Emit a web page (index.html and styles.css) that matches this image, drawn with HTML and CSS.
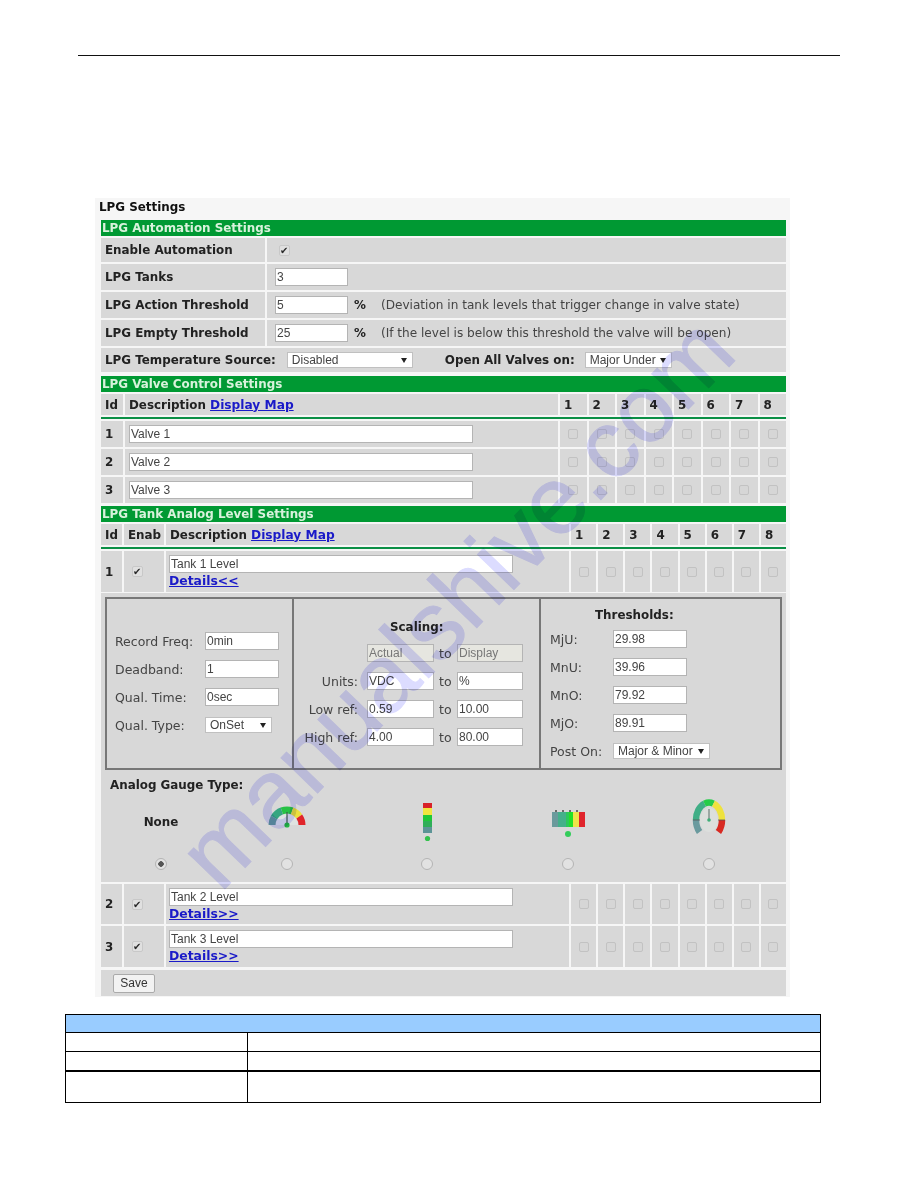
FILE: index.html
```html
<!DOCTYPE html>
<html lang="en">
<head>
  <meta charset="UTF-8" />
  <title>LPG Settings</title>
  <link rel="stylesheet" href="styles.css">
</head>
<body>
  <div class="page-rule"></div>

  <div class="shot">
    <div class="shot-title">LPG Settings</div>
    <form class="form">
      <div class="bar">LPG Automation Settings</div>
      <div class="row row-set h24">
        <div class="cell strong">Enable Automation</div>
        <div class="cell val"><input class="chk chk-main" type="checkbox" checked></div>
      </div>
      <div class="row row-set h26">
        <div class="cell strong">LPG Tanks</div>
        <div class="cell val"><input class="txt w73" type="text" value="3"></div>
      </div>
      <div class="row row-set h26">
        <div class="cell strong">LPG Action Threshold</div>
        <div class="cell val"><input class="txt w73" type="text" value="5"><b class="pct">%</b><span class="note">(Deviation in tank levels that trigger change in valve state)</span></div>
      </div>
      <div class="row row-set h26">
        <div class="cell strong">LPG Empty Threshold</div>
        <div class="cell val"><input class="txt w73" type="text" value="25"><b class="pct">%</b><span class="note">(If the level is below this threshold the valve will be open)</span></div>
      </div>
      <div class="row h24">
        <div class="cell strong temp">
          <span>LPG Temperature Source:</span>
          <select class="sel sel-temp"><option>Disabled</option></select>
          <span class="open-label">Open All Valves on:</span>
          <select class="sel sel-open"><option>Major Under</option></select>
        </div>
      </div>

      <div class="bar bar-next">LPG Valve Control Settings</div>
      <div class="row row-valve h21">
        <div class="cell strong">Id</div>
        <div class="cell strong">Description <a href="#">Display Map</a></div>
        <div class="cell strong num">1</div><div class="cell strong num">2</div><div class="cell strong num">3</div><div class="cell strong num">4</div>
        <div class="cell strong num">5</div><div class="cell strong num">6</div><div class="cell strong num">7</div><div class="cell strong num">8</div>
      </div>
      <div class="green-line"></div>
      <div class="row row-valve h26">
        <div class="cell strong">1</div>
        <div class="cell"><input class="txt w344" type="text" value="Valve 1"></div>
        <div class="cell box"><input class="chk" type="checkbox"></div><div class="cell box"><input class="chk" type="checkbox"></div><div class="cell box"><input class="chk" type="checkbox"></div><div class="cell box"><input class="chk" type="checkbox"></div>
        <div class="cell box"><input class="chk" type="checkbox"></div><div class="cell box"><input class="chk" type="checkbox"></div><div class="cell box"><input class="chk" type="checkbox"></div><div class="cell box"><input class="chk" type="checkbox"></div>
      </div>
      <div class="row row-valve h26">
        <div class="cell strong">2</div>
        <div class="cell"><input class="txt w344" type="text" value="Valve 2"></div>
        <div class="cell box"><input class="chk" type="checkbox"></div><div class="cell box"><input class="chk" type="checkbox"></div><div class="cell box"><input class="chk" type="checkbox"></div><div class="cell box"><input class="chk" type="checkbox"></div>
        <div class="cell box"><input class="chk" type="checkbox"></div><div class="cell box"><input class="chk" type="checkbox"></div><div class="cell box"><input class="chk" type="checkbox"></div><div class="cell box"><input class="chk" type="checkbox"></div>
      </div>
      <div class="row row-valve h26">
        <div class="cell strong">3</div>
        <div class="cell"><input class="txt w344" type="text" value="Valve 3"></div>
        <div class="cell box"><input class="chk" type="checkbox"></div><div class="cell box"><input class="chk" type="checkbox"></div><div class="cell box"><input class="chk" type="checkbox"></div><div class="cell box"><input class="chk" type="checkbox"></div>
        <div class="cell box"><input class="chk" type="checkbox"></div><div class="cell box"><input class="chk" type="checkbox"></div><div class="cell box"><input class="chk" type="checkbox"></div><div class="cell box"><input class="chk" type="checkbox"></div>
      </div>

      <div class="bar bar-tank">LPG Tank Analog Level Settings</div>
      <div class="row row-tank h21">
        <div class="cell strong">Id</div>
        <div class="cell strong">Enab</div>
        <div class="cell strong">Description <a href="#">Display Map</a></div>
        <div class="cell strong num">1</div><div class="cell strong num">2</div><div class="cell strong num">3</div><div class="cell strong num">4</div>
        <div class="cell strong num">5</div><div class="cell strong num">6</div><div class="cell strong num">7</div><div class="cell strong num">8</div>
      </div>
      <div class="green-line"></div>
      <div class="row row-tank h41">
        <div class="cell strong">1</div>
        <div class="cell enab"><input class="chk chk-main" type="checkbox" checked></div>
        <div class="cell desc"><input class="txt w344" type="text" value="Tank 1 Level"><a href="#">Details&lt;&lt;</a></div>
        <div class="cell box"><input class="chk" type="checkbox"></div><div class="cell box"><input class="chk" type="checkbox"></div><div class="cell box"><input class="chk" type="checkbox"></div><div class="cell box"><input class="chk" type="checkbox"></div>
        <div class="cell box"><input class="chk" type="checkbox"></div><div class="cell box"><input class="chk" type="checkbox"></div><div class="cell box"><input class="chk" type="checkbox"></div><div class="cell box"><input class="chk" type="checkbox"></div>
      </div>

      <div class="detail">
        <div class="detail-box">
          <div class="col col-left">
            <label>Record Freq:</label><input class="txt w74" type="text" value="0min">
            <label>Deadband:</label><input class="txt w74" type="text" value="1">
            <label>Qual. Time:</label><input class="txt w74" type="text" value="0sec">
            <label>Qual. Type:</label><select class="sel sel-type"><option>OnSet</option></select>
          </div>
          <div class="col col-mid">
            <div class="col-title scaling">Scaling:</div>
            <div class="scale-grid">
              <span></span><input class="txt off" type="text" value="Actual" disabled><span class="to">to</span><input class="txt off" type="text" value="Display" disabled>
              <label>Units:</label><input class="txt" type="text" value="VDC"><span class="to">to</span><input class="txt" type="text" value="%">
              <label>Low ref:</label><input class="txt" type="text" value="0.59"><span class="to">to</span><input class="txt" type="text" value="10.00">
              <label>High ref:</label><input class="txt" type="text" value="4.00"><span class="to">to</span><input class="txt" type="text" value="80.00">
            </div>
          </div>
          <div class="col col-right">
            <div class="col-title thresholds">Thresholds:</div>
            <div class="thresh-grid">
              <label>MjU:</label><input class="txt w74" type="text" value="29.98">
              <label>MnU:</label><input class="txt w74" type="text" value="39.96">
              <label>MnO:</label><input class="txt w74" type="text" value="79.92">
              <label>MjO:</label><input class="txt w74" type="text" value="89.91">
              <label>Post On:</label><select class="sel sel-post"><option>Major &amp; Minor</option></select>
            </div>
          </div>
        </div>

        <div class="gauge-title">Analog Gauge Type:</div>
        <div class="gauges">
          <div class="gauge">
            <div class="gauge-pic strong">None</div>
            <input class="radio" type="radio" name="gauge" checked>
          </div>
          <div class="gauge">
            <div class="gauge-pic">
              <svg width="60" height="45" viewBox="0 0 60 45" fill="none">
                <path d="M19 26A11 11 0 0 1 41 26Z" fill="#dfe3e1"/>
                <g stroke-width="7">
                  <path d="M15 26A15 15 0 0 1 17 18.5" stroke="#62989a"/>
                  <path d="M17 18.5A15 15 0 0 1 24.87 11.9" stroke="#35a680"/>
                  <path d="M24.87 11.9A15 15 0 0 1 35.13 11.9" stroke="#27c244"/>
                  <path d="M35.13 11.9A15 15 0 0 1 42.29 17.4" stroke="#ece03e"/>
                  <path d="M42.29 17.4A15 15 0 0 1 45 26" stroke="#e0242a"/>
                </g>
                <path d="M30 26V13" stroke="#3f5a50" stroke-width="1.2"/>
                <circle cx="30" cy="26" r="2.6" fill="#22b844"/>
              </svg>
            </div>
            <input class="radio" type="radio" name="gauge">
          </div>
          <div class="gauge">
            <div class="gauge-pic">
              <svg width="60" height="45" viewBox="0 0 60 45">
                <rect x="26" y="4" width="9" height="5" fill="#d82228"/>
                <rect x="26" y="9" width="9" height="7" fill="#f0e640"/>
                <rect x="26" y="16" width="9" height="6" fill="#1fc838"/>
                <rect x="26" y="22" width="9" height="6" fill="#2fae58"/>
                <rect x="26" y="28" width="9" height="6" fill="#5c9496"/>
                <circle cx="30.5" cy="39.5" r="2.6" fill="#33c24c"/>
              </svg>
            </div>
            <input class="radio" type="radio" name="gauge">
          </div>
          <div class="gauge">
            <div class="gauge-pic">
              <svg width="60" height="45" viewBox="0 0 60 45">
                <rect x="14" y="13" width="6" height="15" fill="#6a9a9c"/>
                <rect x="20" y="13" width="8" height="15" fill="#44b08a"/>
                <rect x="28" y="13" width="3" height="15" fill="#2cc85a"/>
                <rect x="31" y="13" width="4" height="15" fill="#22e028"/>
                <rect x="35" y="13" width="6" height="15" fill="#eee44a"/>
                <rect x="41" y="13" width="6" height="15" fill="#e0242c"/>
                <path d="M18 11v2M25 11v2M32 11v2M39 11v2" stroke="#444" stroke-width="1.5"/>
                <circle cx="30" cy="35" r="3" fill="#33cc5a"/>
              </svg>
            </div>
            <input class="radio" type="radio" name="gauge">
          </div>
          <div class="gauge">
            <div class="gauge-pic">
              <svg width="60" height="45" viewBox="0 0 60 45" fill="none">
                <ellipse cx="30" cy="21" rx="9" ry="12" fill="#dcdfdd"/>
                <g stroke-width="6.5">
                  <path d="M20.6 33A13 17.5 0 0 1 17 21" stroke="#6a9a9e"/>
                  <path d="M17 21A13 17.5 0 0 1 25.55 4.56" stroke="#40ae86"/>
                  <path d="M25.55 4.56A13 17.5 0 0 1 34.45 4.56" stroke="#25cc48"/>
                  <path d="M34.45 4.56A13 17.5 0 0 1 43 21" stroke="#eee23e"/>
                  <path d="M43 21A13 17.5 0 0 1 39.4 33" stroke="#d82a22"/>
                </g>
                <path d="M14 21h7M39 21h7" stroke="#555" stroke-width=".8"/>
                <path d="M30 21V10" stroke="#5a6f68" stroke-width="1"/>
                <circle cx="30" cy="21" r="1.8" fill="#3fae78"/>
              </svg>
            </div>
            <input class="radio" type="radio" name="gauge">
          </div>
        </div>
      </div>

      <div class="row row-tank h40">
        <div class="cell strong">2</div>
        <div class="cell enab"><input class="chk chk-main" type="checkbox" checked></div>
        <div class="cell desc"><input class="txt w344" type="text" value="Tank 2 Level"><a href="#">Details&gt;&gt;</a></div>
        <div class="cell box"><input class="chk" type="checkbox"></div><div class="cell box"><input class="chk" type="checkbox"></div><div class="cell box"><input class="chk" type="checkbox"></div><div class="cell box"><input class="chk" type="checkbox"></div>
        <div class="cell box"><input class="chk" type="checkbox"></div><div class="cell box"><input class="chk" type="checkbox"></div><div class="cell box"><input class="chk" type="checkbox"></div><div class="cell box"><input class="chk" type="checkbox"></div>
      </div>
      <div class="row row-tank h41">
        <div class="cell strong">3</div>
        <div class="cell enab"><input class="chk chk-main" type="checkbox" checked></div>
        <div class="cell desc"><input class="txt w344" type="text" value="Tank 3 Level"><a href="#">Details&gt;&gt;</a></div>
        <div class="cell box"><input class="chk" type="checkbox"></div><div class="cell box"><input class="chk" type="checkbox"></div><div class="cell box"><input class="chk" type="checkbox"></div><div class="cell box"><input class="chk" type="checkbox"></div>
        <div class="cell box"><input class="chk" type="checkbox"></div><div class="cell box"><input class="chk" type="checkbox"></div><div class="cell box"><input class="chk" type="checkbox"></div><div class="cell box"><input class="chk" type="checkbox"></div>
      </div>
      <div class="save-row"><button class="save-btn" type="button">Save</button></div>
    </form>
  </div>

  <table class="spec">
    <colgroup><col class="spec-first"><col></colgroup>
    <tr class="spec-head"><td colspan="2"></td></tr>
    <tr class="spec-row"><td></td><td></td></tr>
    <tr class="spec-row"><td></td><td></td></tr>
    <tr class="spec-last"><td></td><td></td></tr>
  </table>

  <div class="watermark">manualshive.com</div>
</body>
</html>
```

FILE: styles.css
```css
html, body {
  margin: 0;
  padding: 0;
  background: #ffffff;
}
body {
  position: relative;
  width: 918px;
  height: 1188px;
  overflow: hidden;
  font-family: "DejaVu Sans", sans-serif;
  font-size: 11.9px;
  color: #333;
}
.page-rule {
  height: 1px;
  margin: 55px 78px 0 78px;
  background: #111;
}

/* screenshot panel */
.shot {
  box-sizing: border-box;
  width: 695px;
  height: 799px;
  margin: 142px 0 0 95px;
  padding: 0 4px 0 6px;
  background: #f6f6f6;
}
.shot-title {
  height: 22px;
  margin-left: -2px;
  line-height: 19px;
  font-weight: bold;
  color: #111;
}
.form {
  display: flex;
  flex-direction: column;
  gap: 2px;
}
.bar {
  height: 16px;
  line-height: 16px;
  padding-left: 1px;
  background: #009933;
  color: #d8f2dc;
  font-weight: bold;
}
.bar-next { margin-top: 2px; }
.bar-tank { margin-top: 1px; }
.green-line {
  height: 2px;
  background: #0a8f45;
}

/* rows */
.row { display: grid; gap: 2px; }
.row-set { grid-template-columns: 164px 1fr; }
.row-valve { grid-template-columns: 22px 433px repeat(8, 1fr); }
.row-tank { grid-template-columns: 21px 40px 403px repeat(8, 1fr); }
.h21 { height: 21px; }
.h24 { height: 24px; }
.h26 { height: 26px; }
.h40 { height: 40px; }
.h41 { height: 41px; }
.cell {
  display: flex;
  align-items: center;
  box-sizing: border-box;
  padding-left: 4px;
  background: #d8d8d8;
  white-space: pre;
}
.strong {
  font-weight: bold;
  color: #222;
}
.val { padding-left: 8px; }
.num { padding-left: 4px; }
.box { justify-content: center; padding-left: 0; }
.enab { padding-left: 8px; }
.desc {
  flex-direction: column;
  align-items: flex-start;
  justify-content: flex-start;
  padding: 4px 0 0 3px;
}
a {
  color: #1a1ac8;
  font-size: 12.2px;
  font-weight: bold;
  text-decoration: underline;
}
.desc a { line-height: 15px; font-size: 12.4px; }
.temp { padding-left: 4px; }
.open-label { margin-left: 32px; }
.pct { margin-left: 6px; color: #222; }
.note { margin-left: 15px; font-size: 12.1px; color: #444; }

/* controls */
.txt {
  box-sizing: border-box;
  height: 18px;
  margin: 0;
  padding: 0 1px;
  border: 1px solid #b4b4b4;
  border-radius: 0;
  background: #fff;
  font-family: "Liberation Sans", sans-serif;
  font-size: 12px;
  color: #444;
  width: 100%;
}
.w73 { width: 73px; }
.w74 { width: 74px; }
.w344 { width: 344px; flex: none; }
.off { background: #e6e6e0; color: #777; }
.sel {
  appearance: none;
  box-sizing: border-box;
  height: 16px;
  margin: 0;
  padding: 0 4px;
  border: 1px solid #c0c0c0;
  border-radius: 0;
  background: #fff url("data:image/svg+xml,%3Csvg xmlns='http://www.w3.org/2000/svg' width='6' height='5'%3E%3Cpath d='M0 0h6L3 5z' fill='%23222'/%3E%3C/svg%3E") no-repeat right 5px center;
  font-family: "Liberation Sans", sans-serif;
  font-size: 12px;
  line-height: 14px;
  color: #444;
}
.sel-temp { width: 126px; margin-left: 11px; }
.sel-open { width: 87px; margin-left: 10px; }
.sel-type { width: 67px; }
.sel-post { width: 97px; }
.chk {
  appearance: none;
  box-sizing: border-box;
  position: relative;
  width: 10px;
  height: 10px;
  margin: 0;
  border: 1px solid #c2c2c2;
  border-radius: 2px;
  background: #d6d6d6;
}
.chk-main {
  width: 11px;
  height: 11px;
  border-color: #c8c8c8;
  background: #e0e0e0;
}
.chk-main:checked::after {
  content: "✔";
  position: absolute;
  left: 0;
  top: -1px;
  font-size: 10px;
  line-height: 11px;
  color: #2a2a2a;
}
.val .chk-main { margin-left: 4px; }
.radio {
  appearance: none;
  box-sizing: border-box;
  width: 12px;
  height: 12px;
  margin: 0;
  border: 1px solid #b4b4b4;
  border-radius: 50%;
  background: #e2e2e2;
}
.radio:checked {
  background: radial-gradient(circle, #555 0 2.5px, #e2e2e2 3px);
}

/* details panel for tank 1 */
.detail {
  box-sizing: border-box;
  height: 289px;
  margin-top: -1px;
  padding: 4px 4px 0 4px;
  background: #d8d8d8;
}
.detail-box {
  display: grid;
  grid-template-columns: 187px 247px 1fr;
  box-sizing: border-box;
  height: 173px;
  border: 2px solid #777;
}
.col { box-sizing: border-box; font-size: 12.5px; }
.col label, .to { color: #444; }
.col-left {
  display: grid;
  grid-template-columns: 90px 74px;
  grid-auto-rows: 18px;
  row-gap: 10px;
  align-items: center;
  align-content: start;
  padding: 33px 0 0 8px;
  border-right: 2px solid #777;
}
.col-mid {
  padding-top: 21px;
  border-right: 2px solid #777;
}
.col-right { padding: 9px 0 0 9px; }
.col-title {
  height: 14px;
  line-height: 14px;
  font-size: 11.9px;
  font-weight: bold;
  color: #222;
}
.scaling { margin: 0 0 10px 96px; }
.thresholds { margin: 0 0 8px 45px; }
.scale-grid {
  display: grid;
  grid-template-columns: 73px 67px 23px 66px;
  grid-auto-rows: 18px;
  row-gap: 10px;
  align-items: center;
}
.scale-grid label {
  padding-right: 9px;
  text-align: right;
}
.to { padding-left: 5px; }
.thresh-grid {
  display: grid;
  grid-template-columns: 63px 97px;
  grid-auto-rows: 18px;
  row-gap: 10px;
  align-items: center;
}
.gauge-title {
  margin: 8px 0 0 5px;
  height: 14px;
  line-height: 14px;
  font-weight: bold;
  color: #222;
}
.gauges {
  display: grid;
  grid-template-columns: 120px 132px 148px 134px 148px;
  margin: 7px 0 0 -4px;
}
.gauge {
  display: flex;
  flex-direction: column;
  align-items: center;
}
.gauge-pic {
  display: flex;
  align-items: center;
  justify-content: center;
  height: 45px;
  margin-bottom: 14px;
}

.save-row {
  display: flex;
  align-items: center;
  height: 26px;
  margin-top: 1px;
  padding-left: 12px;
  background: #d8d8d8;
}
.save-btn {
  box-sizing: border-box;
  width: 42px;
  height: 19px;
  padding: 0;
  border: 1px solid #aaa;
  border-radius: 2px;
  background: #f2f2f2;
  font-family: "Liberation Sans", sans-serif;
  font-size: 12px;
  color: #333;
}

/* empty table under the panel */
.spec {
  width: 756px;
  margin: 17px 0 0 65px;
  border-collapse: collapse;
  table-layout: fixed;
}
.spec td { padding: 0; border: 1px solid #000; }
.spec-first { width: 182px; }
.spec-head td { height: 17px; background: #99ccff; }
.spec-row td { height: 18px; }
.spec-last td { height: 30px; border-top-width: 2px; }

/* watermark lies over the whole page */
.watermark {
  position: absolute;
  left: 456px;
  top: 602px;
  transform: translate(-50%, -50%) rotate(-46deg);
  font-family: "Liberation Sans", sans-serif;
  font-size: 96px;
  line-height: 1;
  white-space: nowrap;
  color: #dcdcff;
  -webkit-text-stroke: 1px #dcdcff;
  mix-blend-mode: multiply;
  pointer-events: none;
}
```
